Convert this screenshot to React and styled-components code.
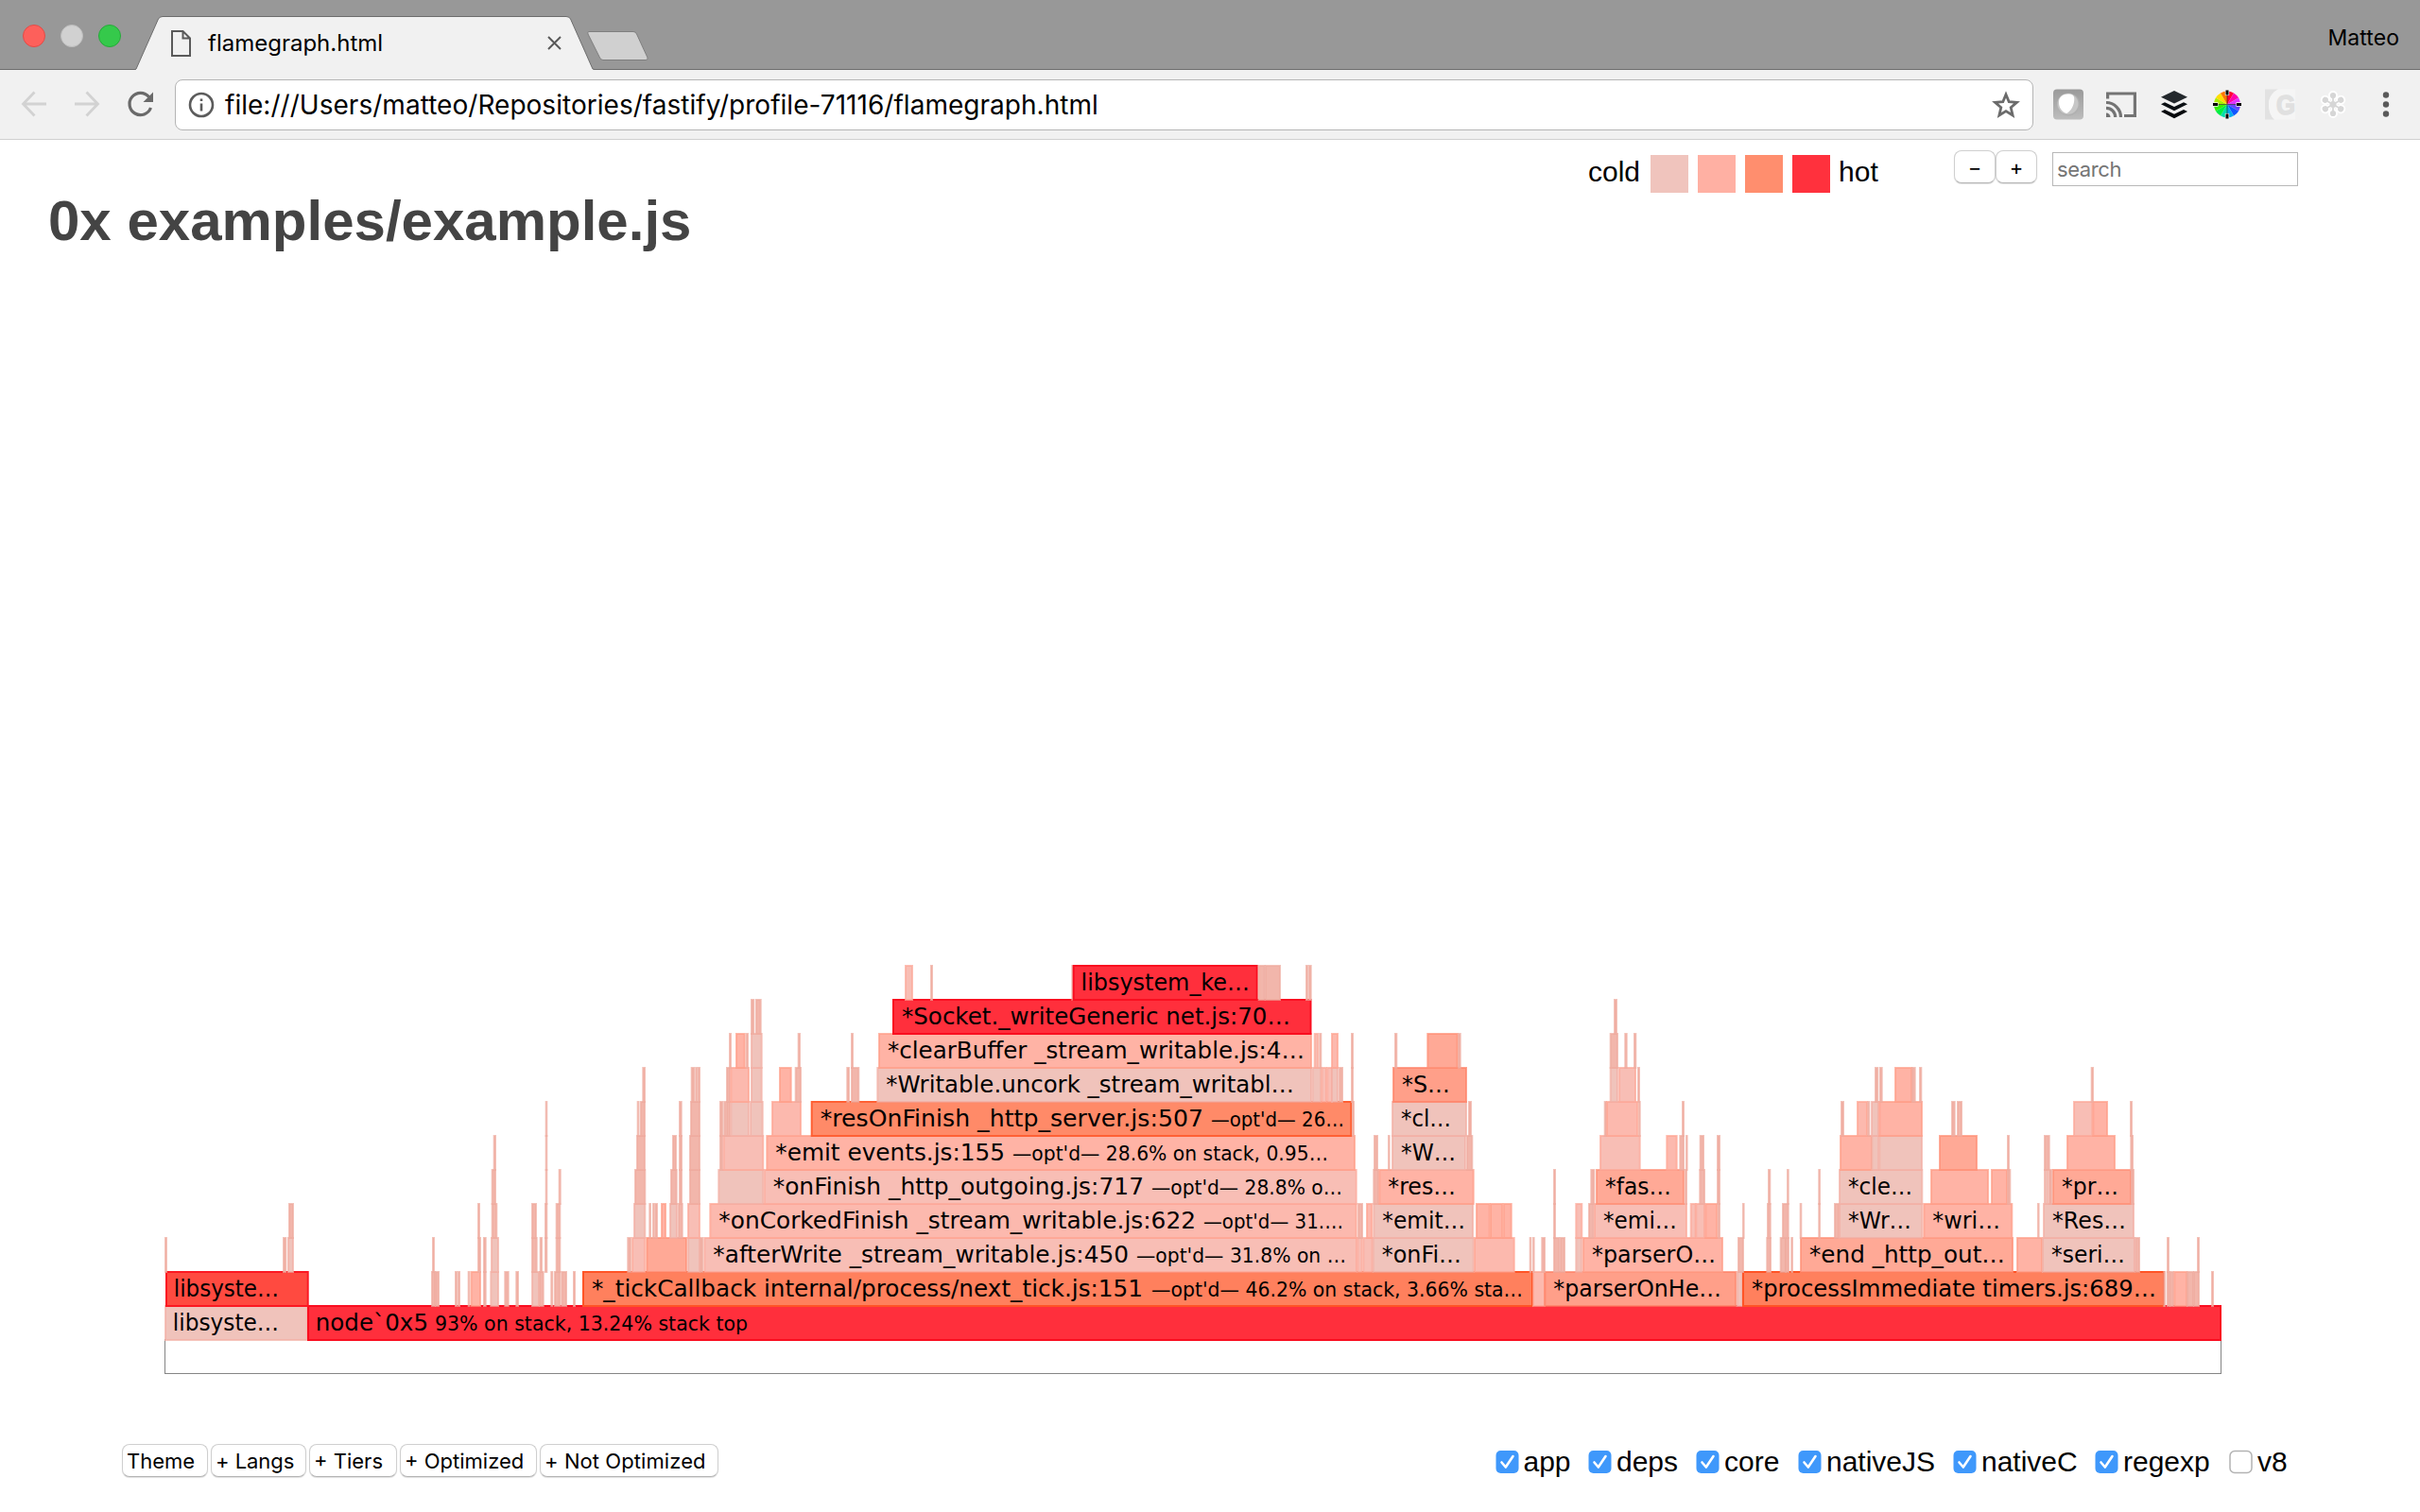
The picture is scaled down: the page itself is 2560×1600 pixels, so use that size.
import React from "react";
import styled, { createGlobalStyle } from "styled-components";

const GlobalStyle = createGlobalStyle`
  html, body { margin: 0; padding: 0; background: #fff; overflow: hidden; }
  * { box-sizing: border-box; }
`;

const ui = `Inter, "Liberation Sans", sans-serif`;
const page = `"Liberation Sans", Arial, sans-serif`;

const Window = styled.div`
  width: 2560px;
  height: 1600px;
  display: flex;
  flex-direction: column;
  background: #fff;
  color: #000;
  font-family: ${page};
`;

/* ---------- browser chrome ---------- */

const TitleBar = styled.header`
  height: 74px;
  display: flex;
  align-items: flex-start;
  background: #989898;
  border-bottom: 1px solid #6d6d6d;
`;
const Lights = styled.div`
  display: flex;
  gap: 16px;
  padding: 26px 0 0 24px;
  width: 143px;
`;
const Light = styled.span`
  width: 24px;
  height: 24px;
  border-radius: 50%;
  background: ${(p) => p.$fill};
  border: 1px solid ${(p) => p.$edge};
`;
const Tab = styled.div`
  position: relative;
  width: 486px;
  height: 74px;
  padding: 17px 35px 0 38px;
  display: flex;
  align-items: center;
`;
const TabShape = styled.svg`
  position: absolute;
  left: 0;
  top: 0;
`;
const TabIcon = styled.svg`
  position: relative;
  flex: none;
`;
const TabTitle = styled.span`
  position: relative;
  flex: 1;
  margin-left: 18px;
  font: 400 24px/30px ${ui};
  letter-spacing: ${(p) => p.$track}px;
  white-space: nowrap;
`;
const NewTab = styled.svg`
  margin-top: 30px;
  margin-left: -10px;
`;
const Profile = styled.span`
  margin-left: auto;
  padding: 25px 22px 0 0;
  font: 400 23px/30px ${ui};
  letter-spacing: 0.05px;
`;
const Toolbar = styled.div`
  height: 74px;
  display: flex;
  align-items: center;
  background: #f1f1f1;
  border-bottom: 1px solid #d0d0d0;
`;
const NavIcons = styled.div`
  display: flex;
  align-items: center;
  width: 185px;
  height: 73px;
`;
const Address = styled.div`
  width: 1966px;
  height: 54px;
  margin-right: 9px;
  display: flex;
  align-items: center;
  padding: 0 13px 0 13px;
  background: #fff;
  border: 1.5px solid #b5b5b5;
  border-radius: 8px;
`;
const Url = styled.span`
  flex: 1;
  margin-left: 11px;
  font: 400 28px/36px ${ui};
  letter-spacing: 0.03px;
  white-space: nowrap;
`;
const ExtIcon = styled.svg`
  width: 56px;
  height: 73px;
  flex: none;
`;

/* ---------- page ---------- */

const Controls = styled.section`
  height: 56px;
  display: flex;
  align-items: flex-start;
  padding: 11px 0 0 1680px;
`;
const LegendLabel = styled.span`
  font-size: 30px;
  line-height: 34px;
  margin: ${(p) => p.$margin};
`;
const Swatches = styled.div`
  display: flex;
  gap: 10px;
  margin: 5px 9px 0 11px;
`;
const Swatch = styled.span`
  width: 40px;
  height: 40px;
  background: ${(p) => p.$color};
`;
const ZoomGroup = styled.div`
  display: flex;
  gap: 0;
  margin-left: auto;
  width: 104px;
`;
const Button = styled.button`
  height: 35px;
  width: ${(p) => p.$width}px;
  padding: ${(p) => (p.$center ? "0" : "0 0 0 4px")};
  text-align: ${(p) => (p.$center ? "center" : "left")};
  background: #fff;
  border: 1px solid #cfcfcf;
  border-bottom-color: #b4b4b4;
  border-radius: 8px;
  box-shadow: 0 1px 1px rgba(0, 0, 0, 0.12);
  font: 400 22px/30px ${ui};
  letter-spacing: ${(p) => p.$track || 0}px;
  color: #000;
  white-space: nowrap;
`;
const Search = styled.input`
  width: 260px;
  height: 36px;
  margin: 2px 129px 0 0;
  padding: 0 0 0 4px;
  border: 1px solid #b8b8b8;
  border-radius: 0;
  background: #fff;
  font: 400 22px/30px ${ui};
  letter-spacing: -0.4px;
  &::placeholder { color: #757575; opacity: 1; }
`;
const Title = styled.h1`
  margin: 0;
  height: 68px;
  padding-left: 51px;
  font: 700 60px/59px ${page};
  letter-spacing: 0;
  color: #444;
  white-space: nowrap;
`;
const Chart = styled.svg`
  display: block;
  flex: none;
  margin: 738px 0 0 170px;
`;
const Footer = styled.footer`
  display: flex;
  align-items: flex-start;
  justify-content: space-between;
  margin-top: 68px;
  padding: 0 140px 0 129px;
`;
const ButtonRow = styled.div`
  display: flex;
  gap: 3px;
`;
const Filters = styled.div`
  display: flex;
  height: 37px;
  align-items: center;
`;
const Filter = styled.label`
  display: flex;
  align-items: center;
  gap: 5px;
  width: ${(p) => p.$width}px;
  font-size: 30px;
  line-height: 36px;
`;
const Check = styled.svg`
  flex: none;
  margin-top: 1px;
`;

/* ---------- flame graph data ---------- */

const TONES = {
  spike: ["#f2b6ab", "#efaa9e"],
  cold: ["#f0c3bb", "#f2aea3"],
  cool: ["#f8beb5", "#fca899"],
  mild: ["#fcb9ae", "#ffa392"],
  warm: ["#ffb3a5", "#ff9c87"],
  amber: ["#ffa996", "#ff8d73"],
  toast: ["#ff9f89", "#ff8064"],
  orange: ["#ff8a68", "#ff6034", 1],
  ember: ["#ff805d", "#ff5426", 1],
  scarlet: ["#ff4a40", "#fc1822", 1],
  hot: ["#ff2f3c", "#fa0e20", 1],
};

/* one list per stack depth, bottom first: [left, right, tone, label, labelEnd, note, noteStart, noteEnd] */
const LEVELS = [
  [
    [174, 326, "cold", "libsyste…", 293],
    [325, 2350, "hot", "node`0x5", 452, "93% on stack, 13.24% stack top", 460, 790],
  ],
  [
    [175, 326.7, "scarlet", "libsyste…", 293],
    [616, 1622, "ember", "*_tickCallback internal/process/next_tick.js:151", 1208, "—opt'd— 46.2% on stack, 3.66% sta…", 1218, 1610],
    [1621, 1635, "mild"], [1633.3, 1837.3, "toast", "*parserOnHe…", 1819], [1836.7, 1844, "cold"],
    [1843, 2290, "ember", "*processImmediate timers.js:689…", 2279],
    [456, 461], [460, 465], [481, 484], [484, 487], [494.7, 497.3], [497.5, 509, "warm"], [511, 514.7],
    [518.3, 528, "cold"], [533.3, 538.7], [545.3, 549], [562, 571, "cold"], [570, 575.7], [582.3, 585.3],
    [586, 593.3], [593.3, 600], [606, 609], [2288.3, 2291], [2291.7, 2296], [2295, 2300], [2299.3, 2314.3, "warm"],
    [2313, 2321], [2320, 2327], [2339, 2342],
  ],
  [
    [174, 177], [299, 303.3], [304, 311, "cold"], [457, 460], [505, 509], [511, 514.7], [519, 528, "cold"],
    [562, 568.7], [570.7, 574], [576, 579.3], [587.7, 593.3],
    [663.3, 668], [668, 683.3, "cool"], [683.3, 727, "amber"], [727, 741, "cold"], [740, 744.3],
    [744.3, 1436, "cool", "*afterWrite _stream_writable.js:450", 1193, "—opt'd— 31.8% on …", 1202, 1423],
    [1435.3, 1441.7, "cool"], [1441.3, 1452.7, "cool"], [1451.7, 1559.7, "cold", "*onFi…", 1544], [1559, 1602.7, "mild"],
    [1617.7, 1620.3], [1621, 1623], [1630.3, 1635], [1643, 1650.3], [1649.7, 1656], [1666.3, 1674.3, "cold"],
    [1674, 1823, "warm", "*parserO…", 1813], [1838, 1845], [1868.3, 1874], [1882.7, 1890], [1888.3, 1893], [1894.3, 1897],
    [1904, 2130, "amber", "*end _http_out…", 2119], [2133, 2161, "warm"],
    [2160, 2259, "cold", "*seri…", 2246], [2258.3, 2264], [2292, 2295], [2324, 2327],
  ],
  [
    [305, 311], [505, 508], [519.7, 526.3], [562, 568], [576, 579.3], [587.7, 593.3],
    [670, 683.3, "cold"], [686.3, 689], [690, 692.3], [692.3, 696], [699, 705, "warm"], [708, 717, "cold"], [717, 722.7], [727, 741, "cool"],
    [750.3, 1435.7, "mild", "*onCorkedFinish _stream_writable.js:622", 1264, "—opt'd— 31.…", 1273, 1420],
    [1436, 1442], [1445, 1452.3, "mild"], [1452.3, 1559, "cold", "*emit…", 1548],
    [1561, 1576.7, "warm"], [1576, 1590.3, "warm"], [1589.7, 1599.7, "warm"],
    [1643, 1646], [1666.3, 1674.3, "cool"], [1680, 1686.7], [1686, 1785, "cool", "*emi…", 1772],
    [1787.7, 1794.7, "cool"], [1793.3, 1804, "cool"], [1803.3, 1817.3, "warm"], [1816.7, 1820],
    [1843, 1845], [1869, 1873.7], [1885, 1892.7], [1903.7, 1906], [1923.3, 1926], [1940, 1946],
    [1945, 2034.3, "cold", "*Wr…", 2020], [2034.3, 2129.3, "warm", "*wri…", 2114],
    [2155, 2157.3], [2161, 2258, "cold", "*Res…", 2247],
  ],
  [
    [519.7, 525], [576.7, 579.3], [590.7, 593.7], [671, 683.3], [709, 716.7], [718, 722], [729, 741],
    [759.3, 808.3, "cold"],
    [807.7, 1435.7, "cool", "*onFinish _http_outgoing.js:717", 1209, "—opt'd— 28.8% o…", 1218, 1419],
    [1452.3, 1459], [1458.3, 1559.7, "warm", "*res…", 1538],
    [1643, 1646], [1682.3, 1687.3], [1688, 1782, "amber", "*fas…", 1766], [1782, 1785], [1797.3, 1804], [1816, 1820],
    [1870, 1873.3], [1890, 1892.7], [1923.3, 1926], [1945, 2034.3, "cold", "*cle…", 2021],
    [2042, 2104, "warm"], [2106, 2124, "warm"], [2123, 2127.3],
    [2162, 2167.3, "cold"], [2167, 2171.3], [2171, 2255, "amber", "*pr…", 2239], [2254, 2258],
  ],
  [
    [521.7, 525], [576.7, 579.3], [673, 683], [711, 716], [718, 722], [729, 741], [761, 765.3],
    [764.7, 808.3, "cool"],
    [810.3, 1434, "warm", "*emit events.js:155", 1062, "—opt'd— 28.6% on stack, 0.95…", 1071, 1404],
    [1453, 1458], [1468, 1470.3], [1472, 1551, "cold", "*W…", 1538], [1551, 1558.3],
    [1692, 1735.7, "cool"], [1762.3, 1774.7, "mild"], [1776.3, 1782], [1783, 1785.3], [1797.7, 1803], [1816, 1820],
    [1946, 1981, "warm"], [1979.3, 1988.3, "cold"], [1987.3, 2034, "cold"], [2051, 2092, "amber"], [2123, 2126],
    [2162, 2168.7], [2186, 2238, "warm"], [2253.3, 2257],
  ],
  [
    [576.7, 579.3], [673.7, 676.3], [676.7, 683], [718, 721.7], [730, 741], [761, 765.3], [765.3, 768.7], [768, 773],
    [772.3, 793, "cold"], [793, 807.7, "cold"], [816, 848, "mild"],
    [857.7, 1430.3, "orange", "*resOnFinish _http_server.js:507", 1272, "—opt'd— 26…", 1281, 1421],
    [1430, 1433], [1472, 1552, "cold", "*cl…", 1533], [1553, 1557],
    [1696.7, 1700], [1699, 1733.3, "mild"], [1733, 1735.7], [1779, 1782],
    [1947, 1951], [1964, 1976, "mild"], [1975.3, 1978.3], [1979, 1988, "cold"], [1987.3, 2034, "warm"],
    [2064, 2068.7], [2070, 2076], [2193, 2214.3, "cool"], [2213.3, 2230, "warm"], [2253, 2256],
  ],
  [
    [679.3, 683], [730.7, 735.3], [735.3, 738.3], [738, 741], [768, 773], [772.3, 793, "mild"], [794, 806.7, "cold"],
    [824, 837.7, "warm"], [840.7, 848], [895.3, 899], [900, 909.3],
    [927.3, 1388, "cold", "*Writable.uncork _stream_writabl…", 1367],
    [1387.5, 1398.3, "cold"], [1397.3, 1404, "cool"], [1403.3, 1410, "cool"], [1408, 1416, "cold"], [1416, 1421], [1429, 1432],
    [1473, 1552, "toast", "*S…", 1532],
    [1702.7, 1712, "cold"], [1712, 1731, "cool"], [1732, 1735],
    [1983, 1987.3], [1988, 1991.7], [2004, 2023.3, "warm"], [2022, 2026.7], [2030, 2033.3], [2211.7, 2215],
  ],
  [
    [771, 774], [778, 788.7, "warm"], [788.7, 792], [794, 806.7, "cold"], [843.7, 847], [900, 903],
    [929, 1388, "warm", "*clearBuffer _stream_writable.js:4…", 1378],
    [1389.7, 1395.3, "cool"], [1395.3, 1398.3], [1408, 1416, "mild"], [1429, 1432],
    [1475, 1478.3], [1509.3, 1542.7, "amber"], [1542, 1545.7],
    [1702.7, 1712], [1718.3, 1721.7], [1728, 1731.3],
  ],
  [
    [794, 798.3], [799, 805.7],
    [944, 1387.5, "hot", "*Socket._writeGeneric net.js:70…", 1363],
    [1707, 1711],
  ],
  [
    [957, 966, "cool"], [984, 987], [1133.3, 1136],
    [1134.7, 1330.7, "hot", "libsystem_ke…", 1320],
    [1330.7, 1338.7], [1337.7, 1355], [1381, 1384], [1384, 1387.7],
  ],
];

const ROW = 36;
const BASE = 1382;

function Frame({ data, level }) {
  const [x0, x1, tone = "spike", label, labelEnd, note, noteStart, noteEnd] = data;
  const y = BASE - ROW * level;
  const [fill, stroke, strokeOpacity = 0.72] = TONES[tone];
  const textX = x0 + (label && label[0] === "*" ? 10 : 8.8);
  const tail = label && label.endsWith("…") ? 2 : 1;
  return (
    <g>
      <rect
        x={x0 + 1}
        y={y}
        width={Math.max(x1 - x0 - 2, 0.6)}
        height={ROW}
        fill={fill}
        stroke={stroke}
        strokeWidth="2"
        strokeOpacity={strokeOpacity}
      />
      {label && (
        <text x={textX} y={y + 26} fontSize="24" textLength={labelEnd + tail - textX} lengthAdjust="spacingAndGlyphs">
          {label}
        </text>
      )}
      {note && (
        <text x={noteStart} y={y + 26} fontSize="20.5" textLength={noteEnd + 1 - noteStart} lengthAdjust="spacingAndGlyphs">
          {note}
        </text>
      )}
    </g>
  );
}

function FlameGraph() {
  return (
    <Chart width="2184" height="450" viewBox="170 1010 2184 450" fontFamily='Verdana, "DejaVu Sans", sans-serif'>
      <rect x="174.5" y="1417.5" width="2175" height="36" fill="#fff" stroke="#858585" />
      {LEVELS.map((frames, level) =>
        frames.map((f, i) => <Frame key={`${level}-${i}`} data={f} level={level} />)
      )}
    </Chart>
  );
}

/* ---------- toolbar drawings ---------- */

const WHEEL = ["#f03", "#f0a", "#d3f", "#64f", "#15f", "#0ae", "#0da", "#0e4", "#3e0", "#ae0", "#fd0", "#f70"];

function ColorWheel() {
  const at = (a, r) => `${28 + r * Math.sin(a)} ${36.5 - r * Math.cos(a)}`;
  return (
    <ExtIcon viewBox="0 0 56 73">
      {WHEEL.map((c, i) => {
        const a = (i * Math.PI) / 6;
        return <path key={c} d={`M28 36.5L${at(a, 14)}A14 14 0 0 1 ${at(a + Math.PI / 6, 14)}Z`} fill={c} />;
      })}
      <path d="M28 27V46M18 36.5H38" stroke="#222" strokeWidth="1" opacity=".6" />
      <path d="M28 22v5M28 46v5M13.500 36.500h5M37.500 36.500h5" stroke="#fff" strokeWidth="4.400" />
      <path d="M28 21.500v5M28 46.500v5M13 36.500h5M38 36.500h5" stroke="#000" strokeWidth="3" />
    </ExtIcon>
  );
}

function Extensions() {
  return (
    <>
      <ExtIcon viewBox="0 0 56 73">
        <defs>
          <linearGradient id="tile" x1="0" y1="0" x2="0" y2="1">
            <stop offset="0" stopColor="#9a9a9a" />
            <stop offset="1" stopColor="#bdbdbd" />
          </linearGradient>
        </defs>
        <rect x="12" y="20.500" width="32" height="32" rx="4" fill="url(#tile)" />
        <circle cx="28" cy="36.500" r="12" fill="#b0b0b0" />
        <circle cx="27.500" cy="36" r="11" fill="#c6c6c6" />
        <path d="M18 34C18 28 23 25 29 25.500C34 26 35 29 34 34C33 40 29 45 26 46C21 44 18 40 18 34Z" fill="#fff" />
      </ExtIcon>
      <ExtIcon viewBox="0 0 56 73" fill="none" stroke="#747474" strokeWidth="3.200">
        <path d="M13.600 30.500V25H42.400V48.500H31" />
        <path d="M12 34.500A15.500 15.500 0 0 1 27.500 50M12 40.300A9.700 9.700 0 0 1 21.700 50" />
        <path d="M12 45.500A4.500 4.500 0 0 1 16.500 50H12Z" fill="#747474" stroke="none" />
      </ExtIcon>
      <ExtIcon viewBox="0 0 56 73">
        <path d="M28 22L42 28.700L28 35.500L14 28.700Z" fill="#23282c" />
        <path d="M14 36.300L18 34.300L28 39L38 34.300L42 36.300L28 43.200Z" fill="#0b1014" />
        <path d="M14 44L18 42L28 46.800L38 42L42 44L28 51.200Z" fill="#06090c" />
      </ExtIcon>
      <ColorWheel />
      <ExtIcon viewBox="0 0 56 73">
        <path d="M12 20.500H26C19 24 16 30 16 36.500C16 43 18 49 22 52.500H12Z" fill="#e2e2e2" />
        <path d="M26 20.500H44V52.500H22C18 49 16 43 16 36.500C16 30 19 24 26 20.500Z" fill="#f5f5f5" />
        <text x="24" y="47" fontFamily="Liberation Sans, sans-serif" fontWeight="700" fontSize="29" textLength="20" lengthAdjust="spacingAndGlyphs" fill="#e0e0e0" stroke="#e0e0e0" strokeWidth="1.500">G</text>
      </ExtIcon>
      <ExtIcon viewBox="0 0 56 73">
        {["#fff", "#d6d6d6"].map((c, layer) => (
          <g key={c} fill={c} stroke={c} strokeWidth={layer ? 1.8 : 4}>
            {[0, 60, 120, 180, 240, 300].map((r) => (
              <g key={r} transform={`rotate(${r} 28 36.500)`}>
                <path d="M28 36.500V27" />
                <circle cx="28" cy="27" r={layer ? 2.2 : 3} />
              </g>
            ))}
            <circle cx="28" cy="36.500" r="2.600" />
          </g>
        ))}
      </ExtIcon>
      <ExtIcon viewBox="0 0 56 73" fill="#5a5a5a">
        <circle cx="28" cy="26.500" r="3.200" />
        <circle cx="28" cy="36.500" r="3.200" />
        <circle cx="28" cy="46.500" r="3.200" />
      </ExtIcon>
    </>
  );
}

function Navigation() {
  return (
    <NavIcons>
      <svg width="185" height="73" viewBox="0 0 185 73" fill="none" strokeWidth="2.800">
        <path d="M49 36H25M36.500 23.500L24.500 36L36.500 48.500" stroke="#d2d2d2" />
        <path d="M79 36H103M91.500 23.500L103.500 36L91.500 48.500" stroke="#d2d2d2" />
        <path d="M157.500 28.500A11.600 11.600 0 1 0 159.500 40" stroke="#6a6a6a" strokeWidth="3.200" />
        <path d="M162 23.500V34H151.500Z" fill="#6a6a6a" />
      </svg>
    </NavIcons>
  );
}

function Checkbox({ on }) {
  return (
    <Check width="25" height="26" viewBox="0 0 25 26">
      {on ? (
        <>
          <rect x="0.500" y="1" width="24" height="24" rx="5" fill="#3f98fb" />
          <path d="M6.500 13.500L10.800 18.500L18.500 7" fill="none" stroke="#fff" strokeWidth="2.600" strokeLinecap="round" strokeLinejoin="round" />
        </>
      ) : (
        <rect x="1" y="1.500" width="23" height="23" rx="5" fill="#fff" stroke="#b3b3b3" strokeWidth="1.500" />
      )}
    </Check>
  );
}

const FILTERS = [
  ["app", 98.5, true],
  ["deps", 114, true],
  ["core", 108, true],
  ["nativeJS", 164, true],
  ["nativeC", 150, true],
  ["regexp", 142, true],
  ["v8", 62, false],
];

const ACTIONS = [
  ["Theme", 91, 0],
  ["+ Langs", 101, -0.05],
  ["+ Tiers", 93, 0],
  ["+ Optimized", 145, 0],
  ["+ Not Optimized", 189, 0.08],
];

export default function App() {
  return (
    <Window>
      <GlobalStyle />
      <TitleBar>
        <Lights>
          <Light $fill="#fd605b" $edge="#e24b47" />
          <Light $fill="#d1d1d1" $edge="#bdbdbd" />
          <Light $fill="#35c94b" $edge="#27a93a" />
        </Lights>
        <Tab>
          <TabShape width="486" height="74" viewBox="0 0 486 74">
            <path d="M0 74L1 73L24.500 20Q26 17.500 29 17.500H456Q459 17.500 460.500 20L484 73L486 74Z" fill="#f1f1f1" />
            <path d="M0 73.500L1 73L24.500 20Q26 17.500 29 17.500H456Q459 17.500 460.500 20L484 73L486 73.500" fill="none" stroke="#6d6d6d" />
          </TabShape>
          <TabIcon width="21" height="28" viewBox="0 0 21 28" fill="none" stroke="#5a5a5a" strokeWidth="2">
            <path d="M1 1H12.500L20 8.500V27H1ZM12.500 1V8.500H20" />
          </TabIcon>
          <TabTitle $track={0}>flamegraph.html</TabTitle>
          <TabIcon width="15" height="15" viewBox="0 0 15 15" stroke="#5a5a5a" strokeWidth="2">
            <path d="M1 1L14 14M14 1L1 14" />
          </TabIcon>
        </Tab>
        <NewTab width="70" height="38" viewBox="0 0 70 38">
          <path d="M4 3.500H51Q53.500 3.500 54.500 6L66 31Q67 33.500 64 33.500H19Q16.500 33.500 15.500 31L3 6Q2 3.500 4 3.500Z" fill="#d0d0d0" stroke="#7f7f7f" />
        </NewTab>
        <Profile>Matteo</Profile>
      </TitleBar>
      <Toolbar>
        <Navigation />
        <Address>
          <svg width="28" height="28" viewBox="0 0 28 28" fill="none" stroke="#5c5c5c" strokeWidth="2.600">
            <circle cx="14" cy="14" r="12" />
            <path d="M14 12.500V20.500M14 7.500V10" />
          </svg>
          <Url>file:///Users/matteo/Repositories/fastify/profile-71116/flamegraph.html</Url>
          <svg width="30" height="30" viewBox="0 0 30 30" fill="none" stroke="#6b6b6b" strokeWidth="2.800">
            <path d="M15 4L18.200 11.700L26.500 12.400L20.200 17.800L22.100 26L15 21.600L7.900 26L9.800 17.800L3.500 12.400L11.800 11.700Z" />
          </svg>
        </Address>
        <Extensions />
      </Toolbar>

      <Controls>
        <LegendLabel $margin="6px 0 0">cold</LegendLabel>
        <Swatches>
          <Swatch $color="#f0c4bd" />
          <Swatch $color="#ffb0a3" />
          <Swatch $color="#ff8e6e" />
          <Swatch $color="#ff313d" />
        </Swatches>
        <LegendLabel $margin="6px 0 0">hot</LegendLabel>
        <ZoomGroup>
          <Button $center $width={44}>−</Button>
          <Button $center $width={44}>+</Button>
        </ZoomGroup>
        <Search placeholder="search" />
      </Controls>
      <Title>0x examples/example.js</Title>
      <FlameGraph />
      <Footer>
        <ButtonRow>
          {ACTIONS.map(([label, width, track]) => (
            <Button key={label} $width={width} $track={track}>{label}</Button>
          ))}
        </ButtonRow>
        <Filters>
          {FILTERS.map(([label, width, on]) => (
            <Filter key={label} $width={width}>
              <Checkbox on={on} />
              {label}
            </Filter>
          ))}
        </Filters>
      </Footer>
    </Window>
  );
}
